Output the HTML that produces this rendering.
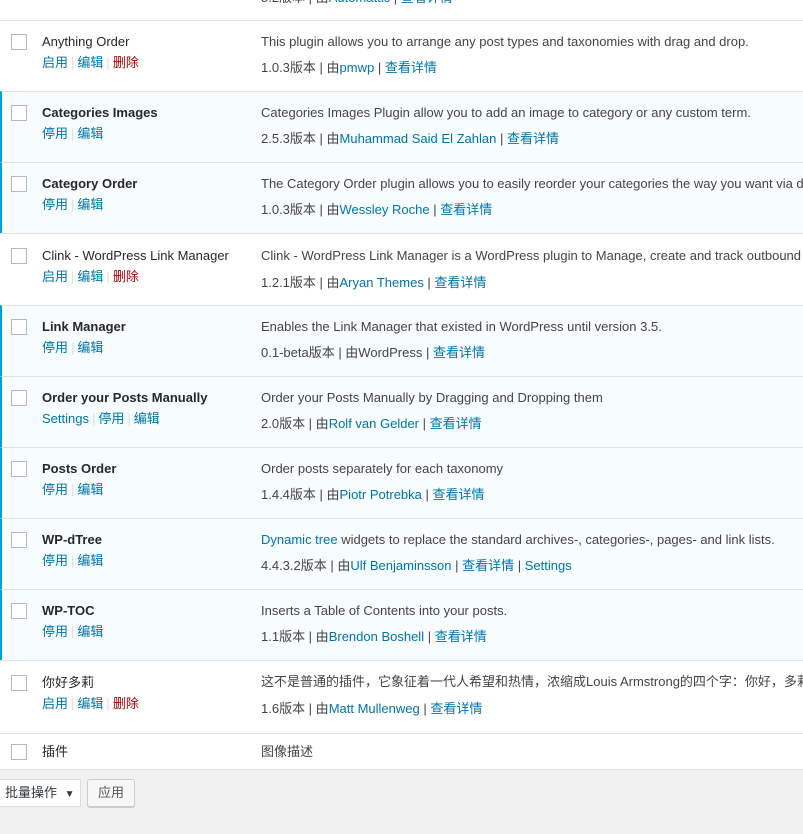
<!DOCTYPE html>
<html><head><meta charset="utf-8"><style>
*{margin:0;padding:0;box-sizing:border-box}
body{width:803px;height:834px;background:#f1f1f1;font-family:"Liberation Sans","Noto Sans CJK SC",sans-serif;font-size:13px;color:#444;position:relative;overflow:hidden}
.tbl{position:absolute;left:0;top:0;width:803px;height:770px;background:#fff;border-bottom:1px solid #e1e1e1;overflow:hidden}
.row{position:absolute;left:0;width:803px;border-top:1px solid #e1e1e1;background:#fff;overflow:hidden}
.row.act{background:#f7fcfe;border-left:2px solid #00a0d2}
.cb{position:absolute;left:11px;top:13px;width:16px;height:16px;border:1px solid #b4b9be;background:#fff}
.act .cb{left:9px}
.nm{position:absolute;left:42px;top:11px;line-height:20px;color:#23282d;white-space:nowrap}
.act .nm{left:40px;font-weight:bold}
.ac{position:absolute;left:42px;top:32px;line-height:20px;white-space:nowrap;color:#0073aa}
.act .ac{left:40px}
.s{color:#ddd;padding:0 3px}
.del{color:#a00}
.ds{position:absolute;left:261px;top:11px;line-height:20px;white-space:nowrap}
.act .ds{left:259px}
.vr{position:absolute;left:261px;top:37px;line-height:20px;white-space:nowrap;color:#444}
.act .vr{left:259px}
a{color:#0073aa;text-decoration:none}
</style></head><body>
<div class="tbl">
<div class="vr" style="top:-12px">5.2版本 | 由<a>Automattic</a> | <a>查看详情</a></div>

<div class="row" style="top:20px;height:71px"><div class="cb"></div><div class="nm">Anything Order</div><div class="ac">启用<span class="s">|</span>编辑<span class="s">|</span><span class="del">删除</span></div><div class="ds">This plugin allows you to arrange any post types and taxonomies with drag and drop.</div><div class="vr">1.0.3版本 | 由<a>pmwp</a> | <a>查看详情</a></div></div>

<div class="row act" style="top:91px;height:71px"><div class="cb"></div><div class="nm">Categories Images</div><div class="ac">停用<span class="s">|</span>编辑</div><div class="ds">Categories Images Plugin allow you to add an image to category or any custom term.</div><div class="vr">2.5.3版本 | 由<a>Muhammad Said El Zahlan</a> | <a>查看详情</a></div></div>

<div class="row act" style="top:162px;height:71px"><div class="cb"></div><div class="nm">Category Order</div><div class="ac">停用<span class="s">|</span>编辑</div><div class="ds">The Category Order plugin allows you to easily reorder your categories the way you want via drag and drop.</div><div class="vr">1.0.3版本 | 由<a>Wessley Roche</a> | <a>查看详情</a></div></div>

<div class="row" style="top:233px;height:72px"><div class="cb" style="top:14px"></div><div class="nm" style="top:12px">Clink - WordPress Link Manager</div><div class="ac" style="top:33px">启用<span class="s">|</span>编辑<span class="s">|</span><span class="del">删除</span></div><div class="ds" style="top:12px">Clink - WordPress Link Manager is a WordPress plugin to Manage, create and track outbound links.</div><div class="vr" style="top:39px">1.2.1版本 | 由<a>Aryan Themes</a> | <a>查看详情</a></div></div>

<div class="row act" style="top:305px;height:71px"><div class="cb"></div><div class="nm">Link Manager</div><div class="ac">停用<span class="s">|</span>编辑</div><div class="ds">Enables the Link Manager that existed in WordPress until version 3.5.</div><div class="vr">0.1-beta版本 | 由WordPress | <a>查看详情</a></div></div>

<div class="row act" style="top:376px;height:71px"><div class="cb"></div><div class="nm">Order your Posts Manually</div><div class="ac">Settings<span class="s">|</span>停用<span class="s">|</span>编辑</div><div class="ds">Order your Posts Manually by Dragging and Dropping them</div><div class="vr">2.0版本 | 由<a>Rolf van Gelder</a> | <a>查看详情</a></div></div>

<div class="row act" style="top:447px;height:71px"><div class="cb"></div><div class="nm">Posts Order</div><div class="ac">停用<span class="s">|</span>编辑</div><div class="ds">Order posts separately for each taxonomy</div><div class="vr">1.4.4版本 | 由<a>Piotr Potrebka</a> | <a>查看详情</a></div></div>

<div class="row act" style="top:518px;height:71px"><div class="cb"></div><div class="nm">WP-dTree</div><div class="ac">停用<span class="s">|</span>编辑</div><div class="ds"><a>Dynamic tree</a> widgets to replace the standard archives-, categories-, pages- and link lists.</div><div class="vr">4.4.3.2版本 | 由<a>Ulf Benjaminsson</a> | <a>查看详情</a> | <a>Settings</a></div></div>

<div class="row act" style="top:589px;height:71px"><div class="cb"></div><div class="nm">WP-TOC</div><div class="ac">停用<span class="s">|</span>编辑</div><div class="ds">Inserts a Table of Contents into your posts.</div><div class="vr">1.1版本 | 由<a>Brendon Boshell</a> | <a>查看详情</a></div></div>

<div class="row" style="top:660px;height:73px"><div class="cb" style="top:14px"></div><div class="nm" style="top:12px">你好多莉</div><div class="ac" style="top:33px">启用<span class="s">|</span>编辑<span class="s">|</span><span class="del">删除</span></div><div class="ds" style="top:11px">这不是普通的插件，它象征着一代人希望和热情，浓缩成Louis Armstrong的四个字：你好，多莉。</div><div class="vr" style="top:38px">1.6版本 | 由<a>Matt Mullenweg</a> | <a>查看详情</a></div></div>

<div class="row" style="top:733px;height:37px"><div class="cb" style="top:10px"></div><div class="nm" style="top:8px">插件</div><div class="ds" style="top:8px">图像描述</div></div>
</div>

<div style="position:absolute;left:-2px;top:779px;width:83px;height:28px;background:#fff;border:1px solid #ddd;line-height:26px;padding-left:6px;color:#32373c">批量操作 <span style="font-size:10px;margin-left:4px">▼</span></div>
<div style="position:absolute;left:87px;top:779px;width:48px;height:28px;background:#f7f7f7;border:1px solid #ccc;border-radius:3px;box-shadow:0 1px 0 #ccc;line-height:26px;text-align:center;color:#555">应用</div>
</body></html>
